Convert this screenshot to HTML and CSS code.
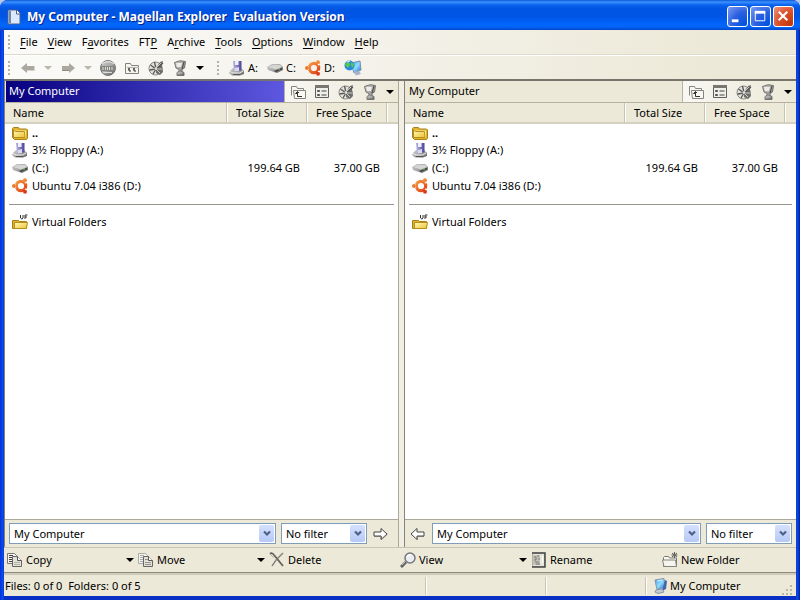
FILE: index.html
```
<!DOCTYPE html>
<html lang="en">
<head>
<meta charset="utf-8">
<title>My Computer - Magellan Explorer</title>
<link rel="stylesheet" href="styles.css">
</head>
<body>
<svg class="sprite" aria-hidden="true">
  <defs>
    <linearGradient id="g-metal" x1="0" y1="0" x2="1" y2="1"><stop offset="0" stop-color="#ccc"/><stop offset=".5" stop-color="#aaa"/><stop offset="1" stop-color="#555"/></linearGradient>
    <linearGradient id="g-gold" x1="0" y1="0" x2="1" y2="1"><stop offset="0" stop-color="#fffbc0"/><stop offset="1" stop-color="#eec22c"/></linearGradient>
    <linearGradient id="g-screen" x1="0" y1="0" x2="1" y2="1"><stop offset="0" stop-color="#3b9df0"/><stop offset=".5" stop-color="#8edcff"/><stop offset="1" stop-color="#2468cf"/></linearGradient>
    <linearGradient id="g-orange" x1="0" y1="0" x2="1" y2="1"><stop offset="0" stop-color="#f59a45"/><stop offset="1" stop-color="#e03d14"/></linearGradient>
    <linearGradient id="g-purple" x1="0" y1="0" x2="1" y2="0"><stop offset="0" stop-color="#b9b4e4"/><stop offset="1" stop-color="#4a4494"/></linearGradient>
    <symbol id="i-doc" viewBox="0 0 16 16"><path d="M2 1h9l3 3v11H2z" fill="#dce9fb" stroke="#4b5f8c"/><path d="M3 2h2v12H3z" fill="#7186ad"/><path d="M10.500 1v4H14" fill="#fff" stroke="#4b5f8c"/></symbol>
    <symbol id="i-back" viewBox="0 0 16 16"><path d="M1 8l6-5v3h7v4H7v3z" fill="#aaa89f"/><path d="M7 10.500h7.500V6" fill="none" stroke="#d6d3c8"/></symbol>
    <symbol id="i-forward" viewBox="0 0 16 16"><path d="M15 8L9 3v3H2v4h7v3z" fill="#aaa89f"/><path d="M2 10.500h7" stroke="#8e8c84"/></symbol>
    <symbol id="i-globe" viewBox="0 0 16 16"><circle cx="8" cy="8" r="7.500" fill="url(#g-metal)" stroke="#777"/><path d="M2 4c3-3 9-3 12 0" fill="none" stroke="#eee"/><path d="M1 6h14v5H1z" fill="#85857f"/><path d="M3 7v3M5.500 7v3M7.500 7v3M9.500 7v3M12 7v3" stroke="#deded6"/><path d="M3 12.500h9" stroke="#ddd"/></symbol>
    <symbol id="i-foldertree" viewBox="0 0 16 16"><path d="M1.500 13.500v-10h5l1 2h7v8z" fill="#f4f3ec" stroke="#85847d"/><path d="M3 7.500h12" stroke="#b5b4aa"/><path d="M5 8v3h2M10 8v3h2M4 9h2M9 9h2" stroke="#333" fill="none"/></symbol>
    <symbol id="i-folderup" viewBox="0 0 16 16"><path d="M1.500 11.500v-9h5l1 2h6v2" fill="#f7f6f0" stroke="#85847d"/><path d="M3.500 6.500h12v8h-11z" fill="#fafaf5" stroke="#85847d"/><path d="M5.500 9.500l2-2 2 2zM7.500 9v3.500H12" fill="#333" stroke="#333"/><path d="M8 9v3h4v-3z" fill="#fafaf5"/></symbol>
    <symbol id="i-list" viewBox="0 0 16 16"><path d="M1.500 1.500h13v12h-13z" fill="#f0efe9" stroke="#5f5f5b"/><path d="M1 1h14v3H1z" fill="#777772"/><path d="M3.500 6.500h2v1h-2zM3.500 10.500h2v1h-2z" fill="#888" stroke="#555"/><path d="M7.500 7h5M7.500 11h5" stroke="#444"/></symbol>
    <symbol id="i-gauge" viewBox="0 0 16 16"><circle cx="7.500" cy="8.500" r="6.500" fill="#e3e2dc" stroke="#8a8a86"/><path d="M8 8L12 2l3-1-1 4 1 7-3 3-4-2z" fill="#6d6d69"/><path d="M8 9L2.500 5M8 9L1.500 10M8 9L5 14M8 9L6.500 2M8 9l7-6" stroke="#575753" stroke-width="1.300"/><path d="M9 7l4-4M9 10l3 3M10 9h4" stroke="#ccc"/><circle cx="8" cy="8.500" r="1.500" fill="#ddd"/></symbol>
    <symbol id="i-drivecup" viewBox="0 0 16 16"><path d="M2.500 2.500Q8-.5 13.500 1.500L12.500 8 10 9.500v2l2 1v3H5v-3l2-1v-2L4 8z" fill="url(#g-metal)" stroke="#73736f"/><path d="M4 3h6L9 7H5z" fill="#ecebe5"/><path d="M12 2l-2 7" stroke="#444"/><path d="M5.500 13h5" stroke="#ccc"/></symbol>
    <symbol id="i-floppy" viewBox="0 0 16 16"><path d="M1 11l3-3h8l3 3v3l-4 1.500H3L0 13z" fill="url(#g-metal)"/><path d="M4 1h8.500v9L10 11H5z" fill="url(#g-purple)"/><path d="M6 1h3.500v4H6z" fill="#edf0fc"/><path d="M5.500 8L10 7v4H5.500z" fill="#d8d9ef"/><path d="M1 11.500l3 1.500h7l3-2" fill="none" stroke="#eee"/><path d="M4 14.500h7" stroke="#555"/></symbol>
    <symbol id="i-disk" viewBox="0 0 16 16"><path d="M0 7l5-3h8l3 3v3l-6 3L1 10z" fill="url(#g-metal)"/><path d="M1 7l5-2h7l2 2-6 2.500z" fill="#d5d5d3"/><path d="M8 11.500l7-3" stroke="#444" stroke-width="1.500"/><path d="M11 9h2" stroke="#83dc70"/></symbol>
    <symbol id="i-ubuntu" viewBox="0 0 16 16"><circle cx="9" cy="8" r="4.700" fill="none" stroke="url(#g-orange)" stroke-width="3.200"/><path d="M0 8l4-2v4zM10 1h5l-1 5zM10 15h5l-1-5z" fill="#fff"/><circle cx="2" cy="8" r="2" fill="#ed7a2d"/><circle cx="13" cy="2.200" r="2" fill="#f28a3a"/><circle cx="13" cy="13.800" r="2" fill="#dc3b14"/></symbol>
    <symbol id="i-network" viewBox="0 0 18 16"><path d="M7 3l9-2 1 9-7 3z" fill="url(#g-screen)" stroke="#788eae"/><path d="M10 12l5-1 2 3-5 1.500z" fill="#a8b4c5"/><circle cx="5.500" cy="5.500" r="5" fill="#2c87e0"/><path d="M1 5c2-5 5-3 5 0L4 8zM7 2l3 2-1 4-2-2z" fill="#56c94e"/><path d="M3 2l3-1" stroke="#d9f7ff"/></symbol>
    <symbol id="i-computer" viewBox="0 0 16 16"><path d="M3 2l9-1.500 1 9-8 2z" fill="url(#g-screen)" stroke="#8494ac"/><path d="M13 2l2 1-1 8-4 2" fill="#4567a6"/><path d="M4 12l6-1 2 3-6 1.500L3 14z" fill="#c3cad4" stroke="#8794a7"/><path d="M5 3l5-1" stroke="#d8f3ff"/></symbol>
    <symbol id="i-folder" viewBox="0 0 16 16"><path d="M.5 12.500v-9l1-1h5l1 1.500h7l1 1v8l-1 1.500h-12z" fill="#e4b32b" stroke="#a48218"/><path d="M3 5.500h11v7H3z" fill="#fff4a0"/><path d="M1.500 12.500V5l2 1.500h9l.5 6z" fill="url(#g-gold)" stroke="#b58e1b"/></symbol>
    <symbol id="i-vfolder" viewBox="0 0 16 16"><path d="M.5 14.500v-8h6l1 1h7v7z" fill="#e4b32b" stroke="#a48218"/><path d="M2.500 8.500h13l-1 6h-12z" fill="url(#g-gold)" stroke="#b58e1b"/><path d="M8.500 1v3q1.500 2 2.500 0V1M13 5V1h2.500M13 3h2" fill="none" stroke="#333"/></symbol>
    <symbol id="i-arrow-r" viewBox="0 0 16 16"><path d="M1 6h7V2.500L14 8l-6 5.500V10H1z" fill="#fff" stroke="#444"/><path d="M1 10.500h7.500v3L14.500 8" fill="none" stroke="#77756b"/></symbol>
    <symbol id="i-arrow-l" viewBox="0 0 16 16"><path d="M15 6H8V2.500L2 8l6 5.500V10h7z" fill="#fff" stroke="#444"/><path d="M15 10.500H8.500v3" fill="none" stroke="#77756b"/></symbol>
    <symbol id="i-copy" viewBox="0 0 16 16"><path d="M.5 1.500h7l2 2v8h-9z" fill="#f4f3ed" stroke="#777"/><path d="M2 3.500h4M2 5.500h4M2 7.500h4M2 9.500h4" stroke="#444"/><path d="M5.500 4.500h5l4 4v6h-9z" fill="#e4e2d7" stroke="#666"/><path d="M10.500 4.500v4h4" fill="#fff" stroke="#555"/><path d="M7 10.500h6M7 12.500h6" stroke="#b6b3a5"/></symbol>
    <symbol id="i-move" viewBox="0 0 16 16"><path d="M.5 1.500h7l2 2v8h-9z" fill="#f4f3ed" stroke="#aaa"/><path d="M2 3.500h4M2 5.500h4M2 7.500h4M2 9.500h4" stroke="#aaa"/><path d="M5.500 4.500h5l4 4v6h-9z" fill="#e4e2d7" stroke="#666"/><path d="M10.500 4.500v4h4" fill="#fff" stroke="#555"/><path d="M7 7.500h3M7 10.500h6M7 12.500h6" stroke="#96948a"/></symbol>
    <symbol id="i-delete" viewBox="0 0 16 16"><path d="M1 2q2-2 4 1l9 11" fill="none" stroke="#62615c" stroke-width="1.800"/><path d="M14 1Q7 7 3 14" fill="none" stroke="#7e7d77" stroke-width="1.500"/><path d="M1.500 2.500l3 3" stroke="#aaa"/></symbol>
    <symbol id="i-view" viewBox="0 0 16 16"><path d="M6 10l-5 5" stroke="#666" stroke-width="3"/><path d="M6 9l-4 4" stroke="#bbb"/><circle cx="10" cy="6" r="5" fill="#e9edf3" stroke="#777" stroke-width="1.500"/><path d="M7 5q1-2.500 4-2" fill="none" stroke="#fff" stroke-width="1.500"/></symbol>
    <symbol id="i-rename" viewBox="0 0 16 16"><path d="M1.500 1v13.500h12V1z" fill="#e7e5d9" stroke="#b0ada0"/><path d="M1 1h13v14H1" fill="none" stroke="#444" stroke-width="1.500"/><path d="M2 3h7v10H2z" fill="#c4c2b7"/><path d="M3 5h2v3H3M6 4h2M4 10h4M5 12h4M7 7h2" stroke="#777" fill="none"/><path d="M11.500 4v7" stroke="#fff"/></symbol>
    <symbol id="i-newfolder" viewBox="0 0 16 16"><path d="M1.500 14.500v-9l1-1h4l1 1.500h7v8.500z" fill="#faf9f5" stroke="#77766f"/><path d="M.5 8h13l1 6.500H2z" fill="#f5f4ef" stroke="#85837b"/><path d="M12.500 0v6M9.500 3h6M10 1l5 4M15 1l-5 4" stroke="#5f5e59"/></symbol>
    <symbol id="i-down" viewBox="0 0 8 4"><path d="M0 0h8L4 4z" fill="currentColor"/></symbol>
    <symbol id="i-chevron" viewBox="0 0 8 7"><path d="M1 1.500l3 3 3-3" fill="none" stroke="#4d6185" stroke-width="2.200"/></symbol>
  </defs>
</svg>

<div class="window">
  <header class="titlebar">
    <svg class="icon"><use href="#i-doc"/></svg>
    <h1>My Computer - Magellan Explorer&nbsp; Evaluation Version</h1>
    <div class="caption-buttons">
      <button type="button" aria-label="Minimize"><svg viewBox="0 0 20 20"><path d="M4 13h7v3H4z" fill="#fff"/></svg></button>
      <button type="button" aria-label="Maximize"><svg viewBox="0 0 20 20"><path d="M4.500 5h10v9.500h-10z" fill="none" stroke="#fff"/><path d="M4 4h11v3H4z" fill="#fff"/></svg></button>
      <button type="button" class="close" aria-label="Close"><svg viewBox="0 0 20 20"><path d="M5 5l9 9M14 5l-9 9" stroke="#fff" stroke-width="2.300"/></svg></button>
    </div>
  </header>

  <div class="client">
    <nav class="menubar">
      <span class="grip"></span>
      <button type="button"><u>F</u>ile</button>
      <button type="button"><u>V</u>iew</button>
      <button type="button">F<u>a</u>vorites</button>
      <button type="button">FT<u>P</u></button>
      <button type="button">A<u>r</u>chive</button>
      <button type="button"><u>T</u>ools</button>
      <button type="button"><u>O</u>ptions</button>
      <button type="button"><u>W</u>indow</button>
      <button type="button"><u>H</u>elp</button>
    </nav>

    <div class="toolbar">
      <span class="grip"></span>
      <button type="button" class="tool" aria-label="Back" disabled><svg class="icon"><use href="#i-back"/></svg></button>
      <button type="button" class="drop muted" aria-label="Back history" disabled><svg class="tri"><use href="#i-down"/></svg></button>
      <button type="button" class="tool" aria-label="Forward" disabled><svg class="icon"><use href="#i-forward"/></svg></button>
      <button type="button" class="drop muted" aria-label="Forward history" disabled><svg class="tri"><use href="#i-down"/></svg></button>
      <button type="button" class="tool" aria-label="FTP connect"><svg class="icon"><use href="#i-globe"/></svg></button>
      <button type="button" class="tool" aria-label="Folder tree"><svg class="icon"><use href="#i-foldertree"/></svg></button>
      <button type="button" class="tool" aria-label="History"><svg class="icon"><use href="#i-gauge"/></svg></button>
      <button type="button" class="tool" aria-label="Favorites"><svg class="icon"><use href="#i-drivecup"/></svg></button>
      <button type="button" class="drop" aria-label="More"><svg class="tri"><use href="#i-down"/></svg></button>
      <span class="grip second"></span>
      <button type="button" class="drive"><svg class="icon"><use href="#i-floppy"/></svg>A:</button>
      <button type="button" class="drive"><svg class="icon"><use href="#i-disk"/></svg>C:</button>
      <button type="button" class="drive"><svg class="icon"><use href="#i-ubuntu"/></svg>D:</button>
      <button type="button" class="drive" aria-label="Network"><svg class="icon wide"><use href="#i-network"/></svg></button>
    </div>

    <main class="panes">
      <section class="pane active">
        <div class="pane-head">
          <h2>My Computer</h2>
          <div class="pane-tools">
            <button type="button" class="tool" aria-label="Up"><svg class="icon"><use href="#i-folderup"/></svg></button>
            <button type="button" class="tool" aria-label="View mode"><svg class="icon"><use href="#i-list"/></svg></button>
            <button type="button" class="tool" aria-label="History"><svg class="icon"><use href="#i-gauge"/></svg></button>
            <button type="button" class="tool" aria-label="Favorites"><svg class="icon"><use href="#i-drivecup"/></svg></button>
            <button type="button" class="drop" aria-label="More"><svg class="tri"><use href="#i-down"/></svg></button>
          </div>
        </div>
        <div class="list">
          <table>
            <colgroup><col><col class="num"><col class="num"><col class="rest"></colgroup>
            <thead><tr><th>Name</th><th>Total Size</th><th>Free Space</th><th></th></tr></thead>
            <tbody>
              <tr><td><span class="item"><svg class="icon"><use href="#i-folder"/></svg><b>..</b></span></td><td></td><td></td><td></td></tr>
              <tr><td><span class="item"><svg class="icon"><use href="#i-floppy"/></svg>3½ Floppy (A:)</span></td><td></td><td></td><td></td></tr>
              <tr><td><span class="item"><svg class="icon"><use href="#i-disk"/></svg>(C:)</span></td><td>199.64 GB</td><td>37.00 GB</td><td></td></tr>
              <tr><td><span class="item"><svg class="icon"><use href="#i-ubuntu"/></svg>Ubuntu 7.04 i386 (D:)</span></td><td></td><td></td><td></td></tr>
              <tr class="divider"><td colspan="4"><hr></td></tr>
              <tr><td><span class="item"><svg class="icon"><use href="#i-vfolder"/></svg>Virtual Folders</span></td><td></td><td></td><td></td></tr>
            </tbody>
          </table>
        </div>
        <div class="pane-foot">
          <div class="combo path"><select aria-label="Left path"><option>My Computer</option></select><span class="knob"><svg><use href="#i-chevron"/></svg></span></div>
          <div class="combo filter"><select aria-label="Left filter"><option>No filter</option></select><span class="knob"><svg><use href="#i-chevron"/></svg></span></div>
          <button type="button" class="swap" aria-label="Copy path to right"><svg class="icon"><use href="#i-arrow-r"/></svg></button>
        </div>
      </section>

      <div class="splitter"></div>

      <section class="pane">
        <div class="pane-head">
          <h2>My Computer</h2>
          <div class="pane-tools">
            <button type="button" class="tool" aria-label="Up"><svg class="icon"><use href="#i-folderup"/></svg></button>
            <button type="button" class="tool" aria-label="View mode"><svg class="icon"><use href="#i-list"/></svg></button>
            <button type="button" class="tool" aria-label="History"><svg class="icon"><use href="#i-gauge"/></svg></button>
            <button type="button" class="tool" aria-label="Favorites"><svg class="icon"><use href="#i-drivecup"/></svg></button>
            <button type="button" class="drop" aria-label="More"><svg class="tri"><use href="#i-down"/></svg></button>
          </div>
        </div>
        <div class="list">
          <table>
            <colgroup><col><col class="num"><col class="num"><col class="rest"></colgroup>
            <thead><tr><th>Name</th><th>Total Size</th><th>Free Space</th><th></th></tr></thead>
            <tbody>
              <tr><td><span class="item"><svg class="icon"><use href="#i-folder"/></svg><b>..</b></span></td><td></td><td></td><td></td></tr>
              <tr><td><span class="item"><svg class="icon"><use href="#i-floppy"/></svg>3½ Floppy (A:)</span></td><td></td><td></td><td></td></tr>
              <tr><td><span class="item"><svg class="icon"><use href="#i-disk"/></svg>(C:)</span></td><td>199.64 GB</td><td>37.00 GB</td><td></td></tr>
              <tr><td><span class="item"><svg class="icon"><use href="#i-ubuntu"/></svg>Ubuntu 7.04 i386 (D:)</span></td><td></td><td></td><td></td></tr>
              <tr class="divider"><td colspan="4"><hr></td></tr>
              <tr><td><span class="item"><svg class="icon"><use href="#i-vfolder"/></svg>Virtual Folders</span></td><td></td><td></td><td></td></tr>
            </tbody>
          </table>
        </div>
        <div class="pane-foot">
          <button type="button" class="swap" aria-label="Copy path to left"><svg class="icon"><use href="#i-arrow-l"/></svg></button>
          <div class="combo path"><select aria-label="Right path"><option>My Computer</option></select><span class="knob"><svg><use href="#i-chevron"/></svg></span></div>
          <div class="combo filter"><select aria-label="Right filter"><option>No filter</option></select><span class="knob"><svg><use href="#i-chevron"/></svg></span></div>
        </div>
      </section>
    </main>

    <div class="actions">
      <div class="action"><button type="button"><svg class="icon"><use href="#i-copy"/></svg>Copy</button><button type="button" class="drop" aria-label="Copy options"><svg class="tri"><use href="#i-down"/></svg></button></div>
      <div class="action"><button type="button"><svg class="icon"><use href="#i-move"/></svg>Move</button><button type="button" class="drop" aria-label="Move options"><svg class="tri"><use href="#i-down"/></svg></button></div>
      <div class="action"><button type="button"><svg class="icon"><use href="#i-delete"/></svg>Delete</button></div>
      <div class="action"><button type="button"><svg class="icon"><use href="#i-view"/></svg>View</button><button type="button" class="drop" aria-label="View options"><svg class="tri"><use href="#i-down"/></svg></button></div>
      <div class="action"><button type="button"><svg class="icon"><use href="#i-rename"/></svg>Rename</button></div>
      <div class="action"><button type="button"><svg class="icon"><use href="#i-newfolder"/></svg>New Folder</button></div>
    </div>

    <footer class="statusbar">
      <div class="status-main">Files: 0 of 0&nbsp; Folders: 0 of 5</div>
      <div></div>
      <div></div>
      <div class="status-place"><svg class="icon"><use href="#i-computer"/></svg>My Computer</div>
      <svg class="sizegrip" viewBox="0 0 12 12"><path d="M9 1h2v2H9zM5 5h2v2H5zM9 5h2v2H9zM1 9h2v2H1zM5 9h2v2H5zM9 9h2v2H9z" fill="#bdb8a3"/></svg>
    </footer>
  </div>
</div>
</body>
</html>
```

FILE: styles.css
```
* { box-sizing: border-box; }

html, body { height: 100%; }

body {
  margin: 0;
  background: #b8c8e8;
  color: #000;
  font: 11px/14px Tahoma, "Noto Sans", sans-serif;
}

button, select { font: inherit; color: inherit; }

button {
  margin: 0;
  padding: 0;
  border: 0;
  background: none;
  white-space: nowrap;
}

h1, h2 { margin: 0; font-weight: normal; font-size: inherit; }

.sprite { position: absolute; width: 0; height: 0; }
.icon { display: block; flex: none; width: 16px; height: 16px; }
.icon.wide { width: 18px; }
.tri { display: block; width: 8px; height: 4px; }

.window {
  display: flex;
  flex-direction: column;
  min-height: 100vh;
  padding: 0 4px 4px;
  border-radius: 8px 8px 0 0;
  background: linear-gradient(90deg, #0831d9, #0a4ff0 3px, transparent 4px, transparent calc(100% - 4px), #0a4ff0 calc(100% - 3px), #001ea0), #0a2fc4;
}

/* Title bar */
.titlebar {
  display: flex;
  align-items: center;
  gap: 5px;
  height: 30px;
  margin: 0 -4px;
  padding: 3px 6px 0;
  border-radius: 8px 8px 0 0;
  background: linear-gradient(#0a58d8 0, #3c91ff 2px, #0a62ef 5px, #0055e2 9px, #0055e5 17px, #0265fc 24px, #0264f8 27px, #0046c8 30px);
  color: #fff;
}

.titlebar h1 {
  flex: 1;
  font: bold 12px/16px "Trebuchet MS", "Noto Sans", sans-serif;
  text-shadow: 1px 1px #0a1f83;
}

.caption-buttons { display: flex; gap: 2px; }

.caption-buttons button {
  width: 21px;
  height: 21px;
  border: 1px solid #fff;
  border-radius: 3px;
  background: radial-gradient(circle at 90% 90%, #0053e0, #2a5fe0 50%, #7c9df2);
}

.caption-buttons .close { background: radial-gradient(circle at 90% 90%, #c23708, #dd512c 55%, #ef9a80); }
.caption-buttons svg { display: block; width: 100%; height: 100%; }

/* Client area */
.client {
  display: flex;
  flex: 1;
  flex-direction: column;
  background: #ece9d8;
}

.menubar, .toolbar {
  display: flex;
  align-items: center;
  padding-left: 4px;
  background: linear-gradient(90deg, #fafaf8, #f4f2ea 45%, #ece9d8 90%);
}

.menubar { height: 25px; border-bottom: 1px solid #dedbcb; }
.toolbar { height: 24px; border-top: 1px solid #fff; }

.menubar button { padding: 0 5px; }
.menubar u { text-decoration: underline; text-underline-offset: 2px; }

.grip {
  width: 2px;
  height: 14px;
  margin-right: 5px;
  background: repeating-linear-gradient(#b5b2a3 0 2px, transparent 2px 4px);
}

.grip.second { margin: 0 10px 0 9px; }

.tool {
  display: grid;
  place-items: center;
  width: 24px;
  height: 20px;
}

.drop {
  display: grid;
  place-items: center;
  width: 16px;
  height: 20px;
}

.drop.muted { color: #bab7ab; }
.toolbar .grip:first-child { margin-right: 6px; }
.drive { display: flex; align-items: center; gap: 3px; margin-right: 9px; }

/* Panes */
.panes {
  display: grid;
  flex: 1;
  grid-template-columns: 394fr 6px 392fr;
  border-top: 2px solid #77756b;
}

.pane {
  display: flex;
  flex-direction: column;
  min-width: 0;
  border-left: 1px solid #85837a;
}

.splitter { border-left: 1px solid #aca899; background: #f1efe3; }

.pane-head {
  display: flex;
  height: 22px;
  border-bottom: 1px solid #b5b2a3;
}

.pane-head h2 {
  flex: 1;
  padding: 3px 4px;
}

.active .pane-head h2 {
  margin: 0 0 0 1px;
  padding-left: 3px;
  background: linear-gradient(90deg, #06007f, #5e58e0);
  color: #fff;
}

.pane-tools {
  display: flex;
  align-items: center;
  padding-left: 1px;
  border-left: 1px solid #b5b2a3;
  background: linear-gradient(90deg, #f8f7f2, #ece9d8);
}

.list { flex: 1; background: #fff; }

table { width: 100%; border-collapse: collapse; table-layout: fixed; }
.num { width: 80px; }
.rest { width: 10px; }
th, td { padding: 0; }

th {
  height: 20px;
  padding: 0 8px;
  border-bottom: 2px solid #d5d1c0;
  background: linear-gradient(90deg, transparent calc(100% - 2px), #c7c5b2 calc(100% - 2px) calc(100% - 1px), #fff calc(100% - 1px)), #ece9d8;
  font-weight: normal;
  text-align: left;
  white-space: nowrap;
}

th:last-child { background: #ece9d8; }
td { height: 18px; padding: 0 8px; text-align: right; white-space: nowrap; }
td:first-child { padding: 0 0 0 7px; text-align: left; }
.item { display: flex; align-items: center; gap: 4px; }
.divider td:first-child { padding: 0 4px; }
hr { margin: 0; border: 0; border-top: 1px solid #96948c; }

/* Combo row */
.pane-foot {
  display: flex;
  align-items: center;
  gap: 5px;
  height: 28px;
  padding: 0 4px;
  border-top: 1px solid #aca899;
}

.combo { position: relative; height: 21px; }
.combo.path { flex: 1; }
.combo.filter { width: 86px; }

select {
  width: 100%;
  height: 100%;
  padding: 0 18px 0 4px;
  border: 1px solid #7f9db9;
  border-radius: 0;
  background: #fff;
  appearance: none;
}

.knob {
  position: absolute;
  top: 2px;
  right: 2px;
  bottom: 2px;
  display: grid;
  place-items: center;
  width: 15px;
  border-radius: 2px;
  background: linear-gradient(#d5e0fd, #b6c9f7);
  pointer-events: none;
}

.knob svg { width: 8px; height: 7px; }
.swap { width: 18px; }
.active .swap { width: 22px; padding-left: 1px; }

/* Function buttons */
.actions {
  display: grid;
  grid-template-columns: repeat(6, 1fr);
  height: 26px;
  padding: 0 3px;
  border-top: 1px solid #c7c4b4;
  border-bottom: 1px solid #8d8b80;
}

.action { display: flex; align-items: center; justify-content: space-between; }
.action button:first-child { display: flex; align-items: center; gap: 3px; }

/* Status bar */
.statusbar {
  display: grid;
  grid-template-columns: 1fr 120px 100px 136px 15px;
  align-items: center;
  height: 23px;
  border-top: 2px solid #cfccbd;
}

.statusbar > div { height: 18px; padding: 2px 1px; }
.statusbar > div + div { border-left: 1px solid #c7c4b4; box-shadow: inset 1px 0 #fff; }
.statusbar .status-place { display: flex; align-items: center; gap: 2px; padding: 0 6px; }
.sizegrip { align-self: end; width: 12px; height: 12px; }
```
